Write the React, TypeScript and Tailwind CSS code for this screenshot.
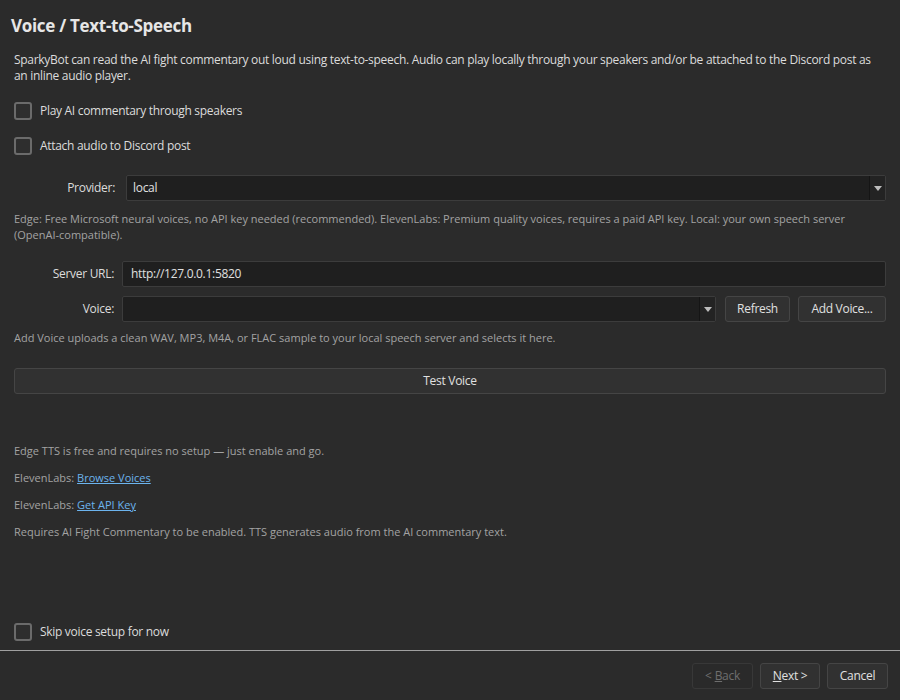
import React from 'react'

const font = { fontFamily: '"Open Sans", "Noto Sans", sans-serif' }

function CheckRow({ label }: { label: string }) {
  return (
    <label className="flex items-center gap-[8px] text-[12px] tracking-[-0.3px] text-[#dcdcdc]">
      <span className="w-[18px] h-[18px] rounded-[3px] border-2 border-[#6b6b6b] bg-[#2e2e2e]" />
      <span>{label}</span>
    </label>
  )
}

function Combo({ value, className }: { value: string; className?: string }) {
  return (
    <div className={'flex h-[26px] rounded-[2px] border border-[#3c3c3c] bg-[#1f1f1f] ' + (className || '')}>
      <div className="flex-1 flex items-center px-[6px] text-[12px] tracking-[-0.3px] text-[#e0e0e0]">{value}</div>
      <div className="w-[16px] flex items-center justify-center border-l border-[#151515] bg-[#232323]">
        <svg width="8" height="5" viewBox="0 0 8 5">
          <path d="M0 0 H8 L4 5 Z" fill="#bdbdbd" />
        </svg>
      </div>
    </div>
  )
}

function Btn({ children, className, disabled }: { children: React.ReactNode; className?: string; disabled?: boolean }) {
  return (
    <button
      className={
        'h-[26px] rounded-[3px] border text-[12px] tracking-[-0.3px] flex items-center justify-center ' +
        (disabled
          ? 'border-[#383838] bg-[#2a2a2a] text-[#6e6e6e] '
          : 'border-[#454545] bg-[#313131] text-[#e0e0e0] ') +
        (className || '')
      }
    >
      {children}
    </button>
  )
}

export default function App() {
  return (
    <div className="w-[900px] h-[700px] bg-[#2b2b2b] flex flex-col overflow-hidden" style={font}>
      {/* 内容区 */}
      <div className="flex-1 flex flex-col px-[14px]">
        <h1 className="mt-[14px] -ml-[3px] text-[17px] font-bold tracking-[-0.3px] text-[#e6e6e6] leading-[24px]">Voice / Text-to-Speech</h1>

        <p className="mt-[14px] text-[12px] tracking-[-0.3px] leading-[16px] text-[#dcdcdc]">
          SparkyBot can read the AI fight commentary out loud using text-to-speech. Audio can play locally through your speakers and/or be attached to the Discord post as an inline audio player.
        </p>

        <div className="mt-[18px]">
          <CheckRow label="Play AI commentary through speakers" />
        </div>
        <div className="mt-[17px]">
          <CheckRow label="Attach audio to Discord post" />
        </div>

        {/* Provider */}
        <div className="mt-[20px] flex items-center">
          <div className="w-[101px] text-right text-[12px] tracking-[-0.3px] text-[#dcdcdc]">Provider:</div>
          <Combo value="local" className="ml-[11px] flex-1" />
        </div>
        <p className="mt-[10px] text-[11px] leading-[16px] text-[#a3a3a3]">
          Edge: Free Microsoft neural voices, no API key needed (recommended). ElevenLabs: Premium quality voices, requires a paid API key. Local: your own speech server (OpenAI-compatible).
        </p>

        {/* Server / Voice */}
        <div className="mt-[18px] flex items-center">
          <div className="w-[100px] text-right text-[12px] tracking-[-0.3px] text-[#dcdcdc]">Server URL:</div>
          <div className="ml-[8px] flex-1 h-[26px] rounded-[2px] border border-[#3c3c3c] bg-[#1f1f1f] flex items-center px-[8px] text-[12px] tracking-[-0.3px] text-[#e0e0e0]">
            http://127.0.0.1:5820
          </div>
        </div>
        <div className="mt-[9px] flex items-center">
          <div className="w-[100px] text-right text-[12px] tracking-[-0.3px] text-[#dcdcdc]">Voice:</div>
          <Combo value="" className="ml-[8px] flex-1" />
          <Btn className="ml-[9px] w-[65px]">Refresh</Btn>
          <Btn className="ml-[8px] w-[88px]">Add Voice...</Btn>
        </div>
        <p className="mt-[8px] text-[11px] leading-[16px] text-[#a3a3a3]">
          Add Voice uploads a clean WAV, MP3, M4A, or FLAC sample to your local speech server and selects it here.
        </p>

        <Btn className="mt-[22px] w-full border-[#444444] bg-[#303030]">Test Voice</Btn>

        {/* 说明 */}
        <div className="mt-[49px] flex flex-col gap-[11px] text-[11px] leading-[16px] text-[#a3a3a3]">
          <p>Edge TTS is free and requires no setup — just enable and go.</p>
          <p>
            ElevenLabs: <a className="text-[#6cb4ee] underline">Browse Voices</a>
          </p>
          <p>
            ElevenLabs: <a className="text-[#6cb4ee] underline">Get API Key</a>
          </p>
          <p>Requires AI Fight Commentary to be enabled. TTS generates audio from the AI commentary text.</p>
        </div>

        <div className="mt-auto mb-[9px]">
          <CheckRow label="Skip voice setup for now" />
        </div>
      </div>

      {/* 底部 */}
      <div className="h-[50px] border-t border-[#a0a0a0] flex items-start justify-end pt-[12px] pr-[12px] gap-[7px]">
        <Btn disabled className="w-[61px]">
          &lt; <span className="underline ml-[3px]">B</span>ack
        </Btn>
        <Btn className="w-[60px]">
          <span className="underline">N</span>ext &gt;
        </Btn>
        <Btn className="w-[61px]">Cancel</Btn>
      </div>
    </div>
  )
}
